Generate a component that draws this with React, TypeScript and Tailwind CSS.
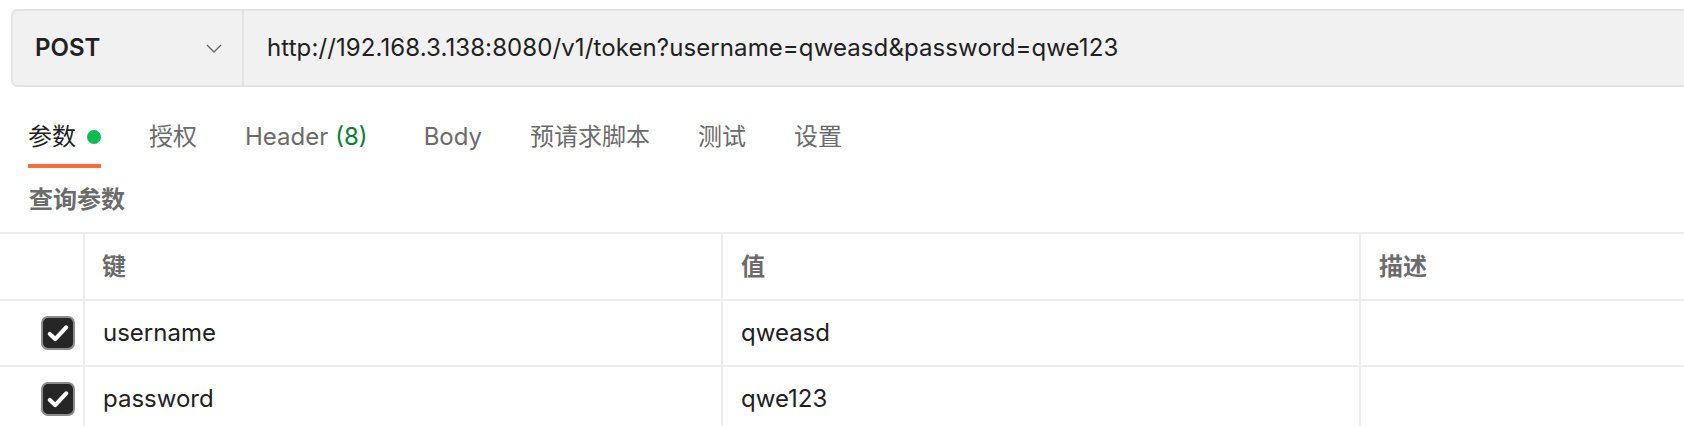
const tabs = [
  { label: "参数", active: true },
  { label: "授权" },
  { label: "Header", count: "(8)" },
  { label: "Body" },
  { label: "预请求脚本" },
  { label: "测试" },
  { label: "设置" },
];

const params = [
  { key: "username", value: "qweasd" },
  { key: "password", value: "qwe123" },
];

const Checkbox = () => (
  <span className="flex h-[34px] w-[34px] items-center justify-center rounded-[7px] border-2 border-[#8c8c8c] bg-[#262626]">
    <svg viewBox="0 0 24 24" className="h-[28px] w-[28px]" fill="none">
      <path
        d="M5 12.8l4.6 4.4L19 7.2"
        stroke="#ffffff"
        strokeWidth={3.6}
        strokeLinecap="round"
        strokeLinejoin="round"
      />
    </svg>
  </span>
);

const App = () => {
  return (
    <div className="h-[426px] w-full overflow-hidden bg-white font-['Inter','Noto_Sans_CJK_SC',sans-serif] text-[24px] text-[#212121]">
      {/* request bar */}
      <div className="ml-[11px] mr-[-12px] mt-[9px] flex h-[78px] rounded-[6px] border-2 border-[#e4e4e4] bg-[#f1f1f1]">
        <div className="flex w-[229px] items-center justify-between pl-[22px] pr-[20px]">
          <span className="font-semibold">POST</span>
          <svg viewBox="0 0 16 9" className="h-[9px] w-[16px]" fill="none">
            <path d="M1 1l7 7 7-7" stroke="#6b6b6b" strokeWidth={1.4} />
          </svg>
        </div>
        <div className="w-[2px] bg-[#e4e4e4]" />
        <div className="flex items-center pl-[23px] tracking-[0.1px]">
          http://192.168.3.138:8080/v1/token?username=qweasd&password=qwe123
        </div>
      </div>

      {/* tabs */}
      <div className="ml-[28px] mt-[21px] flex h-[60px] gap-[48px]">
        {tabs.map((t) => (
          <div
            key={t.label}
            className={
              "flex items-center border-b-4 pt-[2px] " +
              (t.active ? "border-[#ff6c37] text-[#212121]" : "border-transparent text-[#6b6b6b]") +
              (t.label === "Body" ? " ml-[8px]" : "")
            }
          >
            <span>{t.label}</span>
            {t.count && <span className="ml-[7px] text-[#0b7d35]">{t.count}</span>}
            {t.active && <span className="ml-[11px] h-[14px] w-[14px] rounded-full bg-[#0cbb52]" />}
          </div>
        ))}
      </div>

      <div className="flex h-[64px] items-center pl-[29px] font-semibold text-[#6b6b6b]">查询参数</div>

      {/* params table */}
      <div className="border-t-2 border-[#ededed]">
        <div className="flex h-[67px] border-b-2 border-[#ededed] font-semibold text-[#6b6b6b]">
          <div className="w-[85px] border-r-2 border-[#ededed]" />
          <div className="flex w-[638px] items-center border-r-2 border-[#ededed] pl-[17px]">键</div>
          <div className="flex w-[638px] items-center border-r-2 border-[#ededed] pl-[18px]">值</div>
          <div className="flex flex-1 items-center pl-[18px]">描述</div>
        </div>
        {params.map((p) => (
          <div key={p.key} className="flex h-[66px] border-b-2 border-[#ededed]">
            <div className="flex w-[85px] items-center justify-end border-r-2 border-[#ededed] pr-[8px]">
              <Checkbox />
            </div>
            <div className="flex w-[638px] items-center border-r-2 border-[#ededed] pl-[18px]">{p.key}</div>
            <div className="flex w-[638px] items-center border-r-2 border-[#ededed] pl-[18px]">{p.value}</div>
            <div className="flex-1" />
          </div>
        ))}
      </div>
    </div>
  );
};

export default App;
